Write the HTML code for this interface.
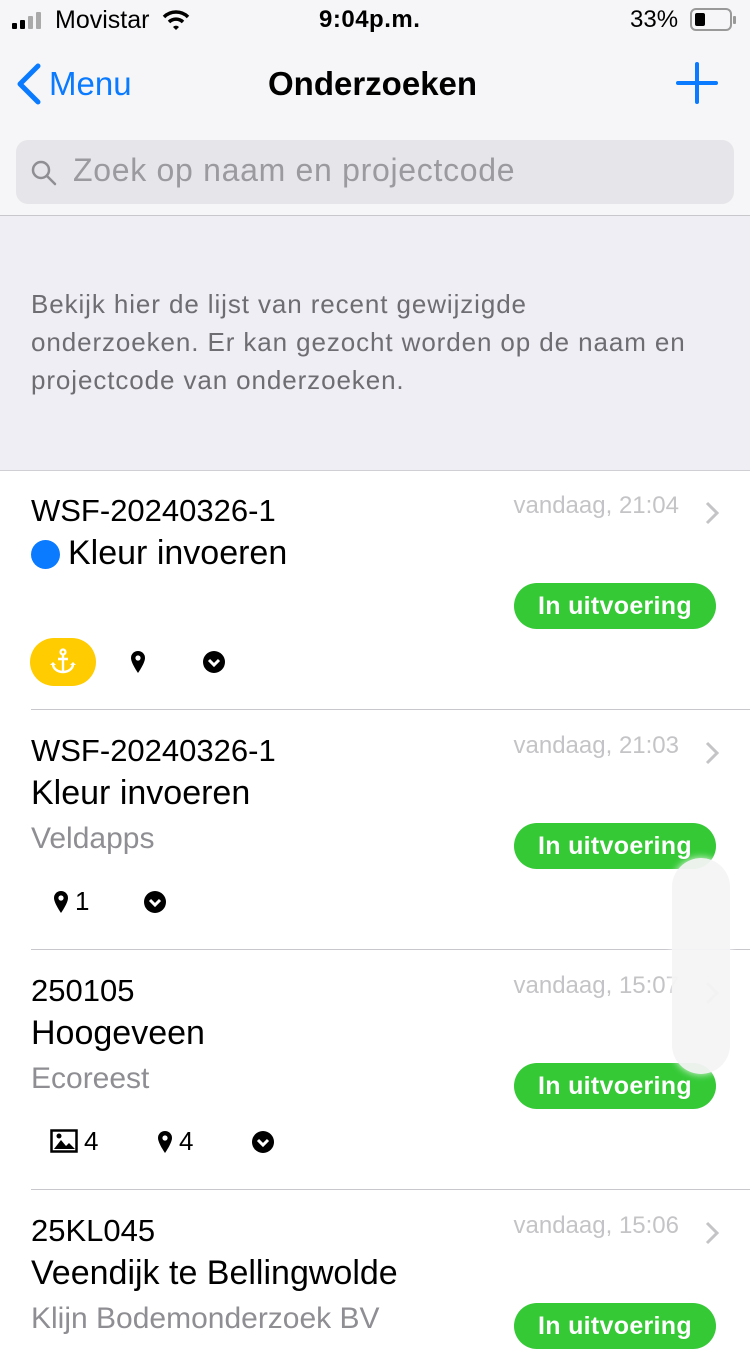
<!DOCTYPE html>
<html><head><meta charset="utf-8"><style>
*{margin:0;padding:0;box-sizing:border-box}
body{width:750px;height:1334px;overflow:hidden;background:#fff;font-family:"Liberation Sans",sans-serif;position:relative;color:#000}
.a{position:absolute;white-space:nowrap}
.hdr{position:absolute;left:0;top:0;width:750px;height:216px;background:#f6f6f8;border-bottom:1px solid #c8c7cc}
.gray{position:absolute;left:0;top:216px;width:750px;height:255px;background:#efeef4;border-bottom:1px solid #d0d0d4}
.code{font-size:31px;left:31px}
.title{font-size:34px;left:31px}
.sub{font-size:30px;left:31px;color:#8e8e93}
.date{font-size:24px;color:#c4c4c7;right:71px}
.badge{position:absolute;left:514px;width:202px;height:46px;border-radius:23px;background:#34c935;color:#fff;font-weight:bold;font-size:25px;letter-spacing:0.3px;line-height:46px;text-align:center}
.sep{position:absolute;left:31px;right:0;height:1px;background:#c8c7cc}
.chev{position:absolute;left:704px}
.n{font-size:26px}
</style></head><body>
<div class="hdr"></div>
<svg class="a" style="left:12px;top:12px" width="36" height="18"><rect x="0" y="11" width="5" height="6" rx="1" fill="#000"/><rect x="8" y="8" width="5" height="9" rx="1" fill="#000"/><rect x="16" y="4" width="5" height="13" rx="1" fill="#aaa"/><rect x="24" y="0" width="5" height="17" rx="1" fill="#aaa"/></svg>
<div class="a" style="left:55px;top:6px;font-size:25px">Movistar</div>
<svg class="a" style="left:162px;top:9px" width="28" height="22" viewBox="0 0 28 22"><path d="M2 8a17 17 0 0 1 24 0" stroke="#000" stroke-width="3.5" fill="none"/><path d="M7 13a10 10 0 0 1 14 0" stroke="#000" stroke-width="3.5" fill="none"/><path d="M11 18l3 3 3-3a4 4 0 0 0-6 0z" fill="#000"/></svg>
<div class="a" style="left:319px;top:6px;font-size:24px;font-weight:bold;letter-spacing:0.5px">9:04p.m.</div>
<div class="a" style="left:630px;top:6px;font-size:24px">33%</div>
<svg class="a" style="left:690px;top:8px" width="48" height="24"><rect x="1" y="1" width="40" height="21" rx="5" fill="none" stroke="#999" stroke-width="2"/><rect x="5" y="5" width="10" height="13" rx="2" fill="#000"/><rect x="43" y="8" width="3" height="8" rx="1" fill="#999"/></svg>
<svg class="a" style="left:14px;top:62px" width="28" height="44"><path d="M24 4L6 22l18 18" stroke="#0a7aff" stroke-width="5" fill="none" stroke-linecap="round" stroke-linejoin="round"/></svg>
<div class="a" style="left:49px;top:65px;font-size:33px;color:#0a7aff">Menu</div>
<div class="a" style="left:268px;top:65px;font-size:33px;font-weight:bold">Onderzoeken</div>
<svg class="a" style="left:676px;top:62px" width="42" height="42"><path d="M21 2v38M2 21h38" stroke="#0a7aff" stroke-width="4" stroke-linecap="round"/></svg>
<div class="a" style="left:16px;top:140px;width:718px;height:64px;background:#e6e6ea;border-radius:12px"></div>
<svg class="a" style="left:30px;top:158px" width="30" height="30"><circle cx="11" cy="12" r="8" stroke="#8e8e93" stroke-width="2.5" fill="none"/><path d="M17 18l8 8" stroke="#8e8e93" stroke-width="2.5" stroke-linecap="round"/></svg>
<div class="a" style="left:73px;top:152px;font-size:32px;letter-spacing:0.7px;color:#9a9a9f">Zoek op naam en projectcode</div>
<div class="gray"></div>
<div class="a" style="left:31px;top:285px;font-size:26px;letter-spacing:0.9px;line-height:38px;color:#6d6d72;white-space:nowrap">Bekijk hier de lijst van recent gewijzigde<br>onderzoeken. Er kan gezocht worden op de naam en<br>projectcode van onderzoeken.</div>

<!-- row 1 -->
<div class="a code" style="top:493px">WSF-20240326-1</div>
<div class="a date" style="top:492px">vandaag, 21:04</div>
<svg class="chev" style="top:500px" width="16" height="26"><path d="M3 3l10 10L3 23" stroke="#c4c4c7" stroke-width="3" fill="none"/></svg>
<div class="a" style="left:31px;top:540px;width:29px;height:29px;border-radius:50%;background:#0a7aff"></div>
<div class="a title" style="left:68px;top:534px">Kleur invoeren</div>
<div class="badge" style="top:583px">In uitvoering</div>
<div class="a" style="left:30px;top:638px;width:66px;height:48px;border-radius:24px;background:#fecc00"></div>
<svg class="a" style="left:50px;top:648px" width="26" height="28" viewBox="0 0 26 28"><circle cx="13" cy="4" r="2.5" fill="none" stroke="#fff" stroke-width="2.2"/><path d="M13 6.5V24M8 11h10M3 16c0 5 5 8 10 8s10-3 10-8" stroke="#fff" stroke-width="2.4" fill="none"/><path d="M0 17l3-3 3 3zM20 17l3-3 3 3z" fill="#fff"/></svg>
<svg class="a" style="left:130px;top:650px" width="16" height="24" viewBox="0 0 16 24"><path d="M8 1a7 7 0 0 0-7 7c0 5 7 15 7 15s7-10 7-15a7 7 0 0 0-7-7z" fill="#000"/><circle cx="8" cy="8" r="2.6" fill="#fff"/></svg>
<svg class="a" style="left:202px;top:650px" width="24" height="24"><circle cx="12" cy="12" r="11" fill="#000"/><path d="M7 10l5 5 5-5" stroke="#fff" stroke-width="3" fill="none"/></svg>
<div class="sep" style="top:709px"></div>

<!-- row 2 -->
<div class="a code" style="top:733px">WSF-20240326-1</div>
<div class="a date" style="top:732px">vandaag, 21:03</div>
<svg class="chev" style="top:740px" width="16" height="26"><path d="M3 3l10 10L3 23" stroke="#c4c4c7" stroke-width="3" fill="none"/></svg>
<div class="a title" style="top:774px">Kleur invoeren</div>
<div class="a sub" style="top:822px">Veldapps</div>
<div class="badge" style="top:823px">In uitvoering</div>
<svg class="a" style="left:53px;top:890px" width="16" height="24" viewBox="0 0 16 24"><path d="M8 1a7 7 0 0 0-7 7c0 5 7 15 7 15s7-10 7-15a7 7 0 0 0-7-7z" fill="#000"/><circle cx="8" cy="8" r="2.6" fill="#fff"/></svg>
<div class="a n" style="left:75px;top:886px">1</div>
<svg class="a" style="left:143px;top:890px" width="24" height="24"><circle cx="12" cy="12" r="11" fill="#000"/><path d="M7 10l5 5 5-5" stroke="#fff" stroke-width="3" fill="none"/></svg>
<div class="sep" style="top:949px"></div>

<!-- row 3 -->
<div class="a code" style="top:973px">250105</div>
<div class="a date" style="top:972px">vandaag, 15:07</div>
<svg class="chev" style="top:980px" width="16" height="26"><path d="M3 3l10 10L3 23" stroke="#c4c4c7" stroke-width="3" fill="none"/></svg>
<div class="a title" style="top:1014px">Hoogeveen</div>
<div class="a sub" style="top:1062px">Ecoreest</div>
<div class="badge" style="top:1063px">In uitvoering</div>
<svg class="a" style="left:50px;top:1129px" width="28" height="24"><rect x="1.5" y="1.5" width="25" height="21" fill="none" stroke="#000" stroke-width="2.5"/><path d="M4 20l7-9 5 6 3-3 6 6z" fill="#000"/><circle cx="9" cy="7" r="2.5" fill="#000"/></svg>
<div class="a n" style="left:84px;top:1126px">4</div>
<svg class="a" style="left:157px;top:1130px" width="16" height="24" viewBox="0 0 16 24"><path d="M8 1a7 7 0 0 0-7 7c0 5 7 15 7 15s7-10 7-15a7 7 0 0 0-7-7z" fill="#000"/><circle cx="8" cy="8" r="2.6" fill="#fff"/></svg>
<div class="a n" style="left:179px;top:1126px">4</div>
<svg class="a" style="left:251px;top:1130px" width="24" height="24"><circle cx="12" cy="12" r="11" fill="#000"/><path d="M7 10l5 5 5-5" stroke="#fff" stroke-width="3" fill="none"/></svg>
<div class="sep" style="top:1189px"></div>

<!-- row 4 -->
<div class="a code" style="top:1213px">25KL045</div>
<div class="a date" style="top:1212px">vandaag, 15:06</div>
<svg class="chev" style="top:1220px" width="16" height="26"><path d="M3 3l10 10L3 23" stroke="#c4c4c7" stroke-width="3" fill="none"/></svg>
<div class="a title" style="top:1254px">Veendijk te Bellingwolde</div>
<div class="a sub" style="top:1302px">Klijn Bodemonderzoek BV</div>
<div class="badge" style="top:1303px">In uitvoering</div>

<div class="a" style="left:672px;top:858px;width:58px;height:216px;border-radius:29px;background:rgba(244,244,246,0.95);box-shadow:0 0 8px rgba(255,255,255,0.9)"></div>
</body></html>
